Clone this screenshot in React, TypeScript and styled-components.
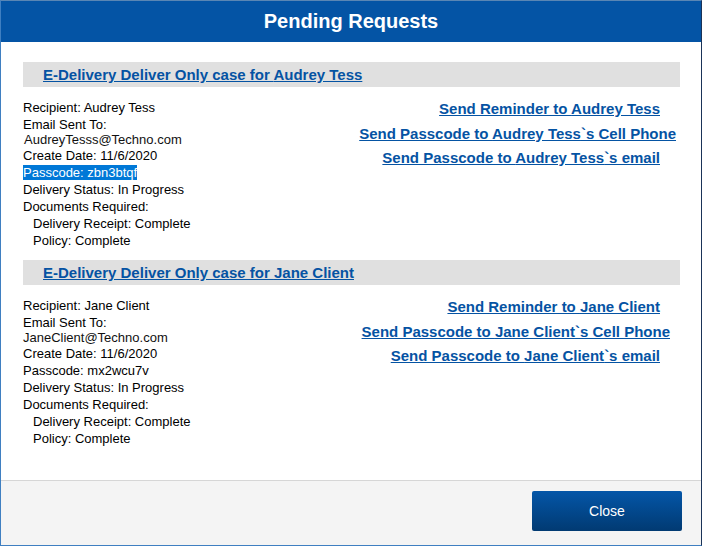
import React from "react";
import styled, { createGlobalStyle } from "styled-components";

const GlobalStyle = createGlobalStyle`
    body {
        margin: 0;
        background: #ffffff;
        font-family: "Liberation Sans", Arial, sans-serif;
    }
`;

const Dialog = styled.div`
    box-sizing: border-box;
    width: 702px;
    height: 546px;
    display: flex;
    flex-direction: column;
    background: #fff;
    border: 1px solid #3f7fc1;
    border-top-color: #5a86b4;
    border-right-color: #1a3358;
`;

const Header = styled.div`
    height: 41px;
    flex: none;
    display: flex;
    align-items: center;
    justify-content: center;
    background: #0454a5;
    color: #fff;
    font-size: 20px;
    font-weight: 700;
`;

const Body = styled.div`
    flex: 1;
    padding: 20px 21px 0 22px;
`;

const Section = styled.div`
    margin-bottom: 11px;
`;

const SectionBar = styled.div`
    height: 25px;
    display: flex;
    align-items: center;
    padding-left: 20px;
    background: #e0e0e0;
`;

const TitleLink = styled.a`
    color: #0553a3;
    font-size: 15px;
    font-weight: 700;
    text-decoration: underline;
    cursor: pointer;
`;

const SectionContent = styled.div`
    display: flex;
    justify-content: space-between;
    padding: 10px 20px 0 0;
`;

const Details = styled.div`
    padding-top: 2px;
    font-size: 13px;
    color: #000;
`;

const Line = styled.div<{ $indent?: boolean }>`
    line-height: 17px;
    padding-left: ${(p) => (p.$indent ? "10px" : "0")};
`;

const EmailBlock = styled.div`
    line-height: 14px;
`;

const EmailValue = styled.div<{ $shift?: number }>`
    padding-left: ${(p) => p.$shift || 0}px;
    color: #111;
`;

const Selected = styled.span`
    background: #0078d7;
    color: #fff;
`;

const Actions = styled.div`
    display: flex;
    flex-direction: column;
    align-items: flex-end;
`;

const ActionLink = styled.a<{ $overhang?: number }>`
    color: #0553a3;
    font-size: 15px;
    font-weight: 700;
    line-height: 24.7px;
    text-decoration: underline;
    cursor: pointer;
    margin-right: ${(p) => -(p.$overhang || 0)}px;
`;

const Footer = styled.div`
    box-sizing: border-box;
    height: 65px;
    flex: none;
    display: flex;
    justify-content: flex-end;
    align-items: flex-start;
    padding: 10px 19px 0 0;
    background: #f4f4f4;
    border-top: 1px solid #d6d6d6;
`;

const CloseButton = styled.button`
    width: 150px;
    height: 40px;
    border: none;
    border-radius: 2px;
    background: linear-gradient(#0456a8, #013a72);
    color: #fff;
    font-family: "Liberation Sans", Arial, sans-serif;
    font-size: 14px;
    cursor: pointer;
`;

type Request = {
    name: string;
    email: string;
    emailShift: number;
    date: string;
    passcode: string;
    selected: boolean;
    phoneOverhang: number;
};

const requests: Request[] = [
    {
        name: "Audrey Tess",
        email: "AudreyTesss@Techno.com",
        emailShift: 1,
        date: "11/6/2020",
        passcode: "zbn3btqf",
        selected: true,
        phoneOverhang: 16,
    },
    {
        name: "Jane Client",
        email: "JaneClient@Techno.com",
        emailShift: 0,
        date: "11/6/2020",
        passcode: "mx2wcu7v",
        selected: false,
        phoneOverhang: 10,
    },
];

const RequestSection = ({ r }: { r: Request }) => (
    <Section>
        <SectionBar>
            <TitleLink>E-Delivery Deliver Only case for {r.name}</TitleLink>
        </SectionBar>
        <SectionContent>
            <Details>
                <Line>Recipient: {r.name}</Line>
                <Line>Email Sent To:</Line>
                <EmailBlock>
                    <EmailValue $shift={r.emailShift}>{r.email}</EmailValue>
                </EmailBlock>
                <Line>Create Date: {r.date}</Line>
                <Line>
                    {r.selected ? (
                        <Selected>Passcode: {r.passcode}</Selected>
                    ) : (
                        <>Passcode: {r.passcode}</>
                    )}
                </Line>
                <Line>Delivery Status: In Progress</Line>
                <Line>Documents Required:</Line>
                <Line $indent>Delivery Receipt: Complete</Line>
                <Line $indent>Policy: Complete</Line>
            </Details>
            <Actions>
                <ActionLink>Send Reminder to {r.name}</ActionLink>
                <ActionLink $overhang={r.phoneOverhang}>
                    Send Passcode to {r.name}`s Cell Phone
                </ActionLink>
                <ActionLink>Send Passcode to {r.name}`s email</ActionLink>
            </Actions>
        </SectionContent>
    </Section>
);

export default function App() {
    return (
        <>
            <GlobalStyle />
            <Dialog>
                <Header>Pending Requests</Header>
                <Body>
                    {requests.map((r) => (
                        <RequestSection key={r.name} r={r} />
                    ))}
                </Body>
                <Footer>
                    <CloseButton>Close</CloseButton>
                </Footer>
            </Dialog>
        </>
    );
}
